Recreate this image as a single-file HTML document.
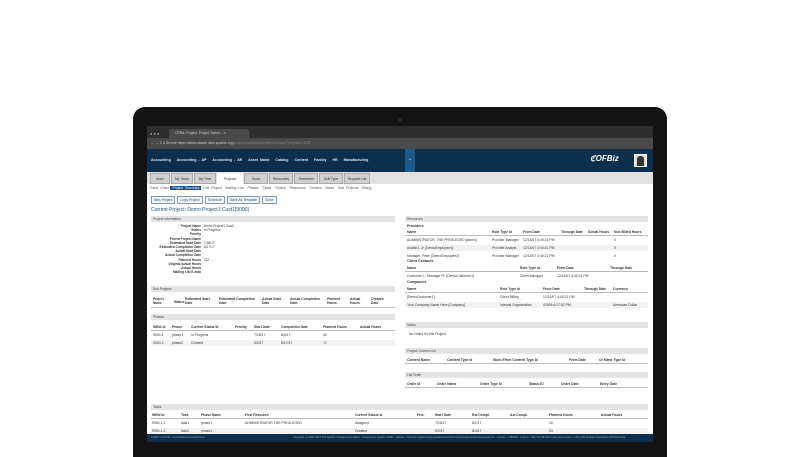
<!DOCTYPE html>
<html><head><meta charset="utf-8"><style>
*{margin:0;padding:0;box-sizing:border-box}
body{width:800px;height:450px;background:#fff;position:relative;overflow:hidden;font-family:"Liberation Sans",sans-serif;font-size:3.4px;color:#333}
.a{position:absolute;white-space:nowrap}
.hd{position:absolute;background:#e4e4e4;height:6px;padding:1.4px 2px;font-size:3.3px;color:#444}
.b{font-weight:bold}
.ln{position:absolute;height:0.6px;background:#bbb}
.row{position:absolute;background:#f2f2f2;height:6px}
</style></head><body>
<!-- laptop bezel -->
<div class="a" style="left:133px;top:107px;width:534px;height:350px;background:#141414;border-radius:12px 12px 0 0"></div>
<div class="a" style="left:398px;top:118px;width:4px;height:4px;border-radius:50%;background:#1c2a3a"></div>
<!-- screen -->
<div class="a" style="left:147px;top:126px;width:506px;height:316px;background:#fff;overflow:hidden">
  <div class="a" style="left:0;top:0;width:506px;height:12px;background:#2e2e2e"></div>
  <div class="a" style="left:3px;top:5px;font-size:4px;color:#aaa">● ● ●</div>
  <div class="a" style="left:22px;top:3px;width:80px;height:9px;background:#4a4a4a;border-radius:2px 2px 0 0;color:#ccc;padding:2px 6px">OFBiz: Project: Project Summ... ×</div>
  <div class="a" style="left:0;top:12px;width:506px;height:11px;background:#4a4a4a"></div>
  <div class="a" style="left:4px;top:15px;color:#ccc">← → C  ● Secure  https://demo-stable-ofbiz.apache.org<span style="color:#888">/projectmgr/control/projectSummary?projectId=9000</span></div>
  <div class="a" style="left:0;top:23px;width:506px;height:23px;background:#0c2f4e"></div>
  <div class="a b" style="left:4px;top:32px;color:#dfe6ee;font-size:3.6px;word-spacing:1px">Accounting &nbsp; Accounting - AP &nbsp; Accounting - AR &nbsp; Asset Maint &nbsp; Catalog &nbsp; Content &nbsp; Facility &nbsp; HR &nbsp; Manufacturing</div>
  <div class="a" style="left:258px;top:23px;width:10px;height:23px;background:#1b5a8c;color:#fff;text-align:center;padding-top:9px">+</div>
  <div class="a" style="left:443px;top:28px;color:#fff;font-style:italic;font-weight:bold;font-size:8px">ℭOFBiz</div>
  <div class="a" style="left:487px;top:28px;width:13px;height:13px;background:#ddd;border:1px solid #fff"></div>
  <div class="a" style="left:490px;top:30px;width:7px;height:10px;background:#333;border-radius:3px 3px 0 0"></div>
  <div class="a" style="left:0;top:46px;width:506px;height:12px;background:#e1e1e1"></div>
  <div class="a" style="left:3px;top:47px;height:11px;display:flex;gap:1px">
    <div style="background:#d0d0d0;width:20px;text-align:center;padding-top:3px;border:0.5px solid #aaa">Main</div>
    <div style="background:#d0d0d0;width:22px;text-align:center;padding-top:3px;border:0.5px solid #aaa">My Tasks</div>
    <div style="background:#d0d0d0;width:22px;text-align:center;padding-top:3px;border:0.5px solid #aaa">My Time</div>
    <div style="background:#fff;width:26px;text-align:center;padding-top:4px">Projects</div>
    <div style="background:#d0d0d0;width:24px;text-align:center;padding-top:3px;border:0.5px solid #aaa">Tasks</div>
    <div style="background:#d0d0d0;width:24px;text-align:center;padding-top:3px;border:0.5px solid #aaa">Resources</div>
    <div style="background:#d0d0d0;width:24px;text-align:center;padding-top:3px;border:0.5px solid #aaa">Timesheet</div>
    <div style="background:#d0d0d0;width:24px;text-align:center;padding-top:3px;border:0.5px solid #aaa">Skill Type</div>
    <div style="background:#d0d0d0;width:26px;text-align:center;padding-top:3px;border:0.5px solid #aaa">Request List</div>
  </div>
  <div class="a" style="left:3px;top:60px;color:#555;word-spacing:1px">Gantt Chart <span style="background:#1d4f7c;color:#fff;padding:0 2px">Project Summary</span> Edit Project &nbsp;Mailing List &nbsp;Phases &nbsp;Tasks &nbsp;Orders &nbsp;Resources &nbsp;Content &nbsp;Notes &nbsp;Sub Projects &nbsp;Billing</div>
  <div class="a" style="left:4px;top:70px;display:flex;gap:2px;color:#1d4f7c">
    <span style="border:0.5px solid #7a9ab8;padding:1px 2px;background:#f4f7fa">New Project</span>
    <span style="border:0.5px solid #7a9ab8;padding:1px 2px;background:#f4f7fa">Copy Project</span>
    <span style="border:0.5px solid #7a9ab8;padding:1px 2px;background:#f4f7fa">Schedule</span>
    <span style="border:0.5px solid #7a9ab8;padding:1px 2px;background:#f4f7fa">Save As Template</span>
    <span style="border:0.5px solid #7a9ab8;padding:1px 2px;background:#f4f7fa">Close</span>
  </div>
  <div class="a" style="left:4px;top:81px;font-size:5px;color:#1d4f7c">Current Project: Demo Project1 Cust1[9000]</div>

  <!-- left column -->
  <div class="hd" style="left:4px;top:90px;width:244px">Project Information</div>
  <div class="a b" style="left:6px;top:98px;width:48px;text-align:right;line-height:4.2px;font-size:3.2px">Project Name<br>Status<br>Priority<br>Parent Project Name<br>Estimated Start Date<br>Estimated Completion Date<br>Actual Start Date<br>Actual Completion Date<br>Planned Hours<br>Original Actual Hours<br>Actual Hours<br>Mailing List E-mail</div>
  <div class="a" style="left:57px;top:98px;line-height:4.2px;font-size:3.2px">Demo Project1 Cust1<br>In Progress<br><br><br>7/28/17<br>8/17/17<br><br><br>112</div>
  <div class="hd" style="left:4px;top:160px;width:244px">Sub Projects</div>
  <div class="a b" style="left:6px;top:172px;font-size:3.2px;line-height:3.6px">Project<br>Name</div>
  <div class="a b" style="left:27px;top:174px">Status</div>
  <div class="a b" style="left:38px;top:172px;line-height:3.6px">Estimated Start<br>Date</div>
  <div class="a b" style="left:72px;top:172px;line-height:3.6px">Estimated Completion<br>Date</div>
  <div class="a b" style="left:115px;top:172px;line-height:3.6px">Actual Start<br>Date</div>
  <div class="a b" style="left:143px;top:172px;line-height:3.6px">Actual Completion<br>Date</div>
  <div class="a b" style="left:180px;top:172px;line-height:3.6px">Planned<br>Hours</div>
  <div class="a b" style="left:203px;top:172px;line-height:3.6px">Actual<br>Hours</div>
  <div class="a b" style="left:224px;top:172px;line-height:3.6px">Created<br>Date</div>
  <div class="ln" style="left:4px;top:181px;width:244px"></div>
  <div class="hd" style="left:4px;top:188px;width:244px">Phases</div>
  <div class="a b" style="left:6px;top:199px;word-spacing:0">WEId Id</div>
  <div class="a b" style="left:25px;top:199px">Phase</div>
  <div class="a b" style="left:44px;top:199px">Current Status Id</div>
  <div class="a b" style="left:88px;top:199px">Priority</div>
  <div class="a b" style="left:107px;top:199px">Start Date</div>
  <div class="a b" style="left:134px;top:199px">Completion Date</div>
  <div class="a b" style="left:176px;top:199px">Planned Hours</div>
  <div class="a b" style="left:213px;top:199px">Actual Hours</div>
  <div class="ln" style="left:4px;top:204px;width:244px"></div>
  <div class="a" style="left:6px;top:207px">9000-1</div><div class="a" style="left:25px;top:207px">phase1</div><div class="a" style="left:44px;top:207px">In Progress</div><div class="a" style="left:107px;top:207px">7/28/17</div><div class="a" style="left:134px;top:207px">8/4/17</div><div class="a" style="left:176px;top:207px">40</div>
  <div class="row" style="left:4px;top:214px;width:244px"></div>
  <div class="a" style="left:6px;top:215px">9000-2</div><div class="a" style="left:25px;top:215px">phase2</div><div class="a" style="left:44px;top:215px">Created</div><div class="a" style="left:107px;top:215px">8/2/17</div><div class="a" style="left:134px;top:215px">8/17/17</div><div class="a" style="left:176px;top:215px">72</div>

  <!-- right column -->
  <div class="hd" style="left:258px;top:90px;width:243px">Resources</div>
  <div class="a b" style="left:260px;top:98px;font-size:3.6px">Providers</div>
  <div class="a b" style="left:260px;top:104px">Name</div><div class="a b" style="left:345px;top:104px">Role Type Id</div><div class="a b" style="left:376px;top:104px">From Date</div><div class="a b" style="left:414px;top:104px">Through Date</div><div class="a b" style="left:441px;top:104px">Actual Hours</div><div class="a b" style="left:467px;top:104px">Non Billed Hours</div>
  <div class="ln" style="left:258px;top:109px;width:243px"></div>
  <div class="a" style="left:260px;top:112px">ADMINISTRATOR, THE PRIVILEGED [admin]</div><div class="a" style="left:345px;top:112px">Provider Manager</div><div class="a" style="left:376px;top:112px">12/14/07 4:40:21 PM</div><div class="a" style="left:467px;top:112px">0</div>
  <div class="row" style="left:258px;top:119px;width:243px"></div>
  <div class="a" style="left:260px;top:120px">Analist1, Jr. [DemoEmployee1]</div><div class="a" style="left:345px;top:120px">Provider Analyst</div><div class="a" style="left:376px;top:120px">12/14/07 4:40:21 PM</div><div class="a" style="left:467px;top:120px">0</div>
  <div class="a" style="left:260px;top:128px">Manager, Peter [DemoEmployee2]</div><div class="a" style="left:345px;top:128px">Provider Manager</div><div class="a" style="left:376px;top:128px">12/14/07 4:40:21 PM</div><div class="a" style="left:467px;top:128px">0</div>
  <div class="a b" style="left:260px;top:133px;font-size:3.6px">Client Contacts</div>
  <div class="a b" style="left:260px;top:140px">Name</div><div class="a b" style="left:373px;top:140px">Role Type Id</div><div class="a b" style="left:410px;top:140px">From Date</div><div class="a b" style="left:463px;top:140px">Through Date</div>
  <div class="ln" style="left:258px;top:145px;width:243px"></div>
  <div class="a" style="left:260px;top:148px">Customer, L. Manager Ft. [DemoCustomer1]</div><div class="a" style="left:373px;top:148px">Client Manager</div><div class="a" style="left:410px;top:148px">12/14/07 4:40:21 PM</div>
  <div class="a b" style="left:260px;top:154px;font-size:3.6px">Companies</div>
  <div class="a b" style="left:260px;top:161px">Name</div><div class="a b" style="left:353px;top:161px">Role Type Id</div><div class="a b" style="left:396px;top:161px">From Date</div><div class="a b" style="left:437px;top:161px">Through Date</div><div class="a b" style="left:466px;top:161px">Currency</div>
  <div class="ln" style="left:258px;top:166px;width:243px"></div>
  <div class="a" style="left:260px;top:169px">[DemoCustomer1]</div><div class="a" style="left:353px;top:169px">Client Billing</div><div class="a" style="left:396px;top:169px">12/14/07 4:40:21 PM</div>
  <div class="row" style="left:258px;top:176px;width:243px"></div>
  <div class="a" style="left:260px;top:177px">Your Company Name Here [Company]</div><div class="a" style="left:353px;top:177px">Internal Organization</div><div class="a" style="left:396px;top:177px">4/3/09 6:27:02 PM</div><div class="a" style="left:466px;top:177px">American Dollar</div>
  <div class="hd" style="left:258px;top:196px;width:243px">Notes</div>
  <div class="a" style="left:262px;top:206px">No Notes for this Project.</div>
  <div class="hd" style="left:258px;top:222px;width:243px">Project Content List</div>
  <div class="a b" style="left:260px;top:232px">Content Name</div><div class="a b" style="left:300px;top:232px">Content Type Id</div><div class="a b" style="left:346px;top:232px">Work Effort Content Type Id</div><div class="a b" style="left:422px;top:232px">From Date</div><div class="a b" style="left:452px;top:232px">Or Mime Type Id</div>
  <div class="ln" style="left:258px;top:237px;width:243px"></div>
  <div class="hd" style="left:258px;top:246px;width:243px">List Order</div>
  <div class="a b" style="left:260px;top:256px">Order Id</div><div class="a b" style="left:290px;top:256px">Order Name</div><div class="a b" style="left:333px;top:256px">Order Type Id</div><div class="a b" style="left:382px;top:256px">Status ID</div><div class="a b" style="left:414px;top:256px">Order Date</div><div class="a b" style="left:453px;top:256px">Entry Date</div>
  <div class="ln" style="left:258px;top:261px;width:243px"></div>

  <!-- tasks -->
  <div class="hd" style="left:4px;top:278px;width:497px">Tasks</div>
  <div class="a b" style="left:5px;top:287px">WEId Id</div><div class="a b" style="left:34px;top:287px">Task</div><div class="a b" style="left:54px;top:287px">Phase Name</div><div class="a b" style="left:98px;top:287px">First Resource</div><div class="a b" style="left:208px;top:287px">Current Status Id</div><div class="a b" style="left:270px;top:287px">Prio.</div><div class="a b" style="left:288px;top:287px">Start Date</div><div class="a b" style="left:325px;top:287px">Est.Compl.</div><div class="a b" style="left:363px;top:287px">Act.Compl.</div><div class="a b" style="left:402px;top:287px">Planned Hours</div><div class="a b" style="left:454px;top:287px">Actual Hours</div>
  <div class="ln" style="left:4px;top:292px;width:497px"></div>
  <div class="a" style="left:5px;top:295px">9000-1-1</div><div class="a" style="left:34px;top:295px">task1</div><div class="a" style="left:54px;top:295px">phase1</div><div class="a" style="left:98px;top:295px">ADMINISTRATOR,THE PRIVILEGED</div><div class="a" style="left:208px;top:295px">Assigned</div><div class="a" style="left:288px;top:295px">7/28/17</div><div class="a" style="left:325px;top:295px">8/1/17</div><div class="a" style="left:402px;top:295px">16</div>
  <div class="row" style="left:4px;top:302px;width:497px"></div>
  <div class="a" style="left:5px;top:303px">9000-1-2</div><div class="a" style="left:34px;top:303px">task2</div><div class="a" style="left:54px;top:303px">phase1</div><div class="a" style="left:208px;top:303px">Created</div><div class="a" style="left:288px;top:303px">8/2/17</div><div class="a" style="left:325px;top:303px">8/4/17</div><div class="a" style="left:402px;top:303px">24</div>

  <!-- footer -->
  <div class="a" style="left:0;top:308px;width:506px;height:8px;background:#0c2f4e;color:#8fa5bb;font-size:2.6px;padding-top:2.4px">
    <span style="margin-left:4px">12/8/17 4:24 PM - Coordinated Universal Time</span>
    <span style="position:absolute;left:146px">Copyright (c) 2001-2017 The Apache Software Foundation - Powered by Apache OFBiz - release - http://svn.apache.org/repos/asf/ofbiz/ofbiz-framework/branches/release16.11 - revision - 1789009 - built on - 2017-07-28 03:00 with java version - 1.8.0_151 (Oracle Corporation (95.151-b12))</span>
  </div>
</div>
</body></html>
